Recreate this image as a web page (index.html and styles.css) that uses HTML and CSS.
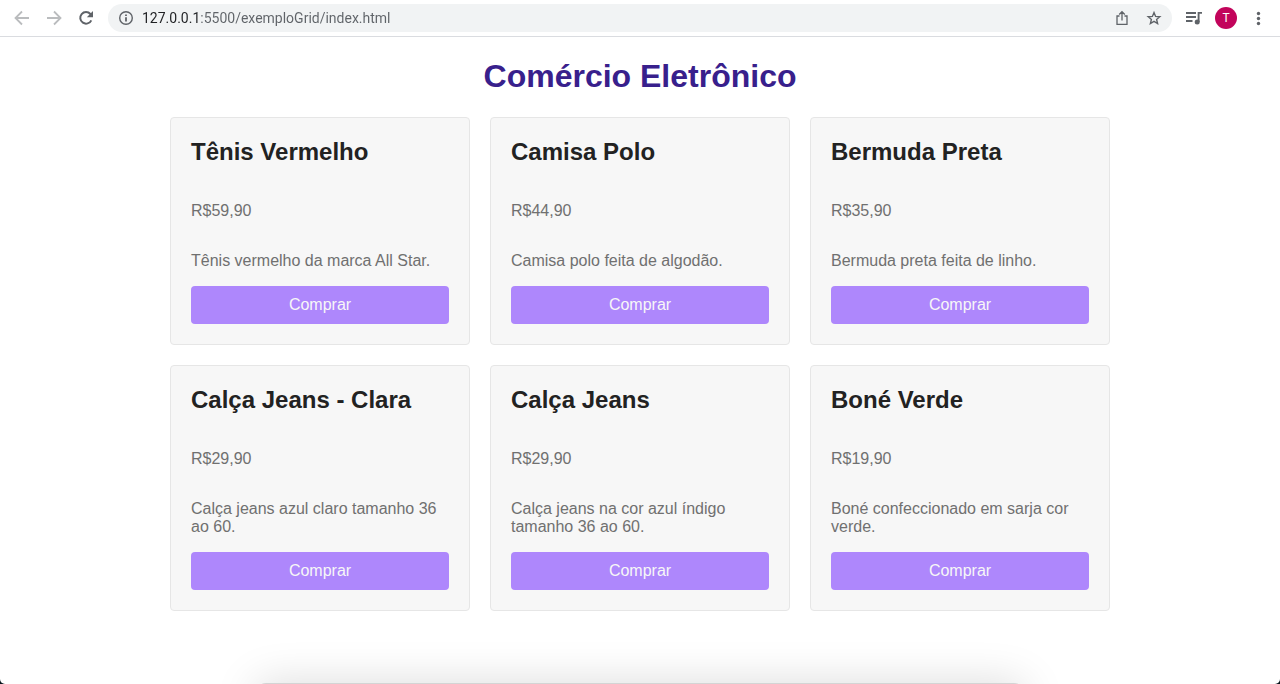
FILE: index.html
```html
<!DOCTYPE html>
<html lang="pt-BR">
<head>
<meta charset="utf-8">
<meta name="viewport" content="width=device-width, initial-scale=1">
<title>Comércio Eletrônico</title>
<link rel="stylesheet" href="styles.css">
</head>
<body>
<div class="window">
  <header class="toolbar">
    <nav class="nav-buttons" aria-label="Navegação">
      <button class="icon-button faded" type="button" aria-label="Voltar"><svg viewBox="0 0 16 16"><path d="M15 8H2M8 1.5 1.5 8 8 14.5"/></svg></button>
      <button class="icon-button faded" type="button" aria-label="Avançar"><svg viewBox="0 0 16 16"><path d="M1 8h13M8 1.5 14.5 8 8 14.5"/></svg></button>
      <button class="icon-button" type="button" aria-label="Recarregar"><svg viewBox="0 0 16 16"><path stroke-width="2" d="M13.3 10.3A5.8 5.8 0 1 1 12.4 4L13.6 5.2"/><path class="solid" d="M15 1v6.2H8.8z"/></svg></button>
    </nav>
    <div class="address-bar">
      <button class="icon-button" type="button" aria-label="Informações do site"><svg viewBox="0 0 16 16"><circle cx="8" cy="8" r="6.3" stroke-width="1.4"/><path d="M8 7.2v4.2M8 4.4v1.7"/></svg></button>
      <input class="address" type="text" aria-label="Endereço" value="127.0.0.1:5500/exemploGrid/index.html">
      <button class="icon-button" type="button" aria-label="Compartilhar"><svg viewBox="0 0 16 16"><path stroke-width="1.3" d="M5.5 6H3v8.300h10V6h-2.500M8 10.500V1.800M5.200 4.500 8 1.700l2.800 2.800"/></svg></button>
      <button class="icon-button" type="button" aria-label="Favoritar"><svg viewBox="0 0 16 16"><path stroke-width="1.4" d="m8 2.500 1.600 3.900 4.200.3-3.200 2.700 1 4.100L8 11.300l-3.600 2.200 1-4.100-3.200-2.700 4.200-.3z"/></svg></button>
    </div>
    <div class="tools">
      <button class="icon-button" type="button" aria-label="Controlar mídia"><svg viewBox="0 0 16 16"><path d="M0 3h10M0 7h10M0 11h6.500" stroke-width="1.800"/><path d="M12.600 12V2.900H16" stroke-width="1.900"/><circle class="solid" cx="11.200" cy="12" r="2.500"/></svg></button>
      <button class="avatar" type="button" aria-label="Perfil T">T</button>
      <button class="icon-button" type="button" aria-label="Menu"><svg viewBox="0 0 16 16"><g class="solid"><circle cx="8.500" cy="3.500" r="1.700"/><circle cx="8.500" cy="8.500" r="1.700"/><circle cx="8.500" cy="13.500" r="1.700"/></g></svg></button>
    </div>
  </header>
  <main class="store">
    <h1 class="store-title">Comércio Eletrônico</h1>
    <div class="products">
      <article class="card"><h2 class="name">Tênis Vermelho</h2><p class="price">R$59,90</p><p class="description">Tênis vermelho da marca All Star.</p><button class="buy" type="button">Comprar</button></article>
      <article class="card"><h2 class="name">Camisa Polo</h2><p class="price">R$44,90</p><p class="description">Camisa polo feita de algodão.</p><button class="buy" type="button">Comprar</button></article>
      <article class="card"><h2 class="name">Bermuda Preta</h2><p class="price">R$35,90</p><p class="description">Bermuda preta feita de linho.</p><button class="buy" type="button">Comprar</button></article>
      <article class="card"><h2 class="name">Calça Jeans - Clara</h2><p class="price">R$29,90</p><p class="description">Calça jeans azul claro tamanho 36 ao 60.</p><button class="buy" type="button">Comprar</button></article>
      <article class="card"><h2 class="name">Calça Jeans</h2><p class="price">R$29,90</p><p class="description">Calça jeans na cor azul índigo tamanho 36 ao 60.</p><button class="buy" type="button">Comprar</button></article>
      <article class="card"><h2 class="name">Boné Verde</h2><p class="price">R$19,90</p><p class="description">Boné confeccionado em sarja cor verde.</p><button class="buy" type="button">Comprar</button></article>
    </div>
  </main>
  <div class="dock-edge"></div>
</div>
</body>
</html>
```
FILE: styles.css
```css
* { box-sizing: border-box; }
html { background: #06161c; }
body { margin: 0; font-family: "Liberation Sans", Arial, sans-serif; font-size: 16px; line-height: 18px; }
button { border: 0; padding: 0; background: none; font: inherit; }

.window {
  position: relative;
  min-height: 100vh;
  overflow: hidden;
  background: #fff;
  border-radius: 0 0 5px 5px;
}

.toolbar {
  display: flex;
  align-items: center;
  gap: 14px;
  padding: 4px 14px;
  border-bottom: 1px solid #dadce0;
}
.nav-buttons, .tools { display: flex; align-items: center; }
.nav-buttons { gap: 16px; }
.tools { gap: 13px; }
.icon-button { display: flex; flex: none; color: #5f6368; }
.icon-button.faded { color: #babcbe; }
.icon-button svg { width: 16px; height: 16px; fill: none; stroke: currentColor; stroke-width: 1.8; }
.icon-button .solid { fill: currentColor; stroke: none; }

.address-bar {
  display: flex;
  flex: 1;
  align-items: center;
  gap: 16px;
  height: 28px;
  padding: 0 10px;
  border-radius: 14px;
  background: #f1f3f4;
}
/* The host is darker than the rest of the address. */
.address {
  flex: 1;
  min-width: 0;
  margin-left: -8px;
  padding: 0;
  border: 0;
  font: 14px/20px Roboto, sans-serif;
  color: transparent;
  background: linear-gradient(to right, #202124 59px, #5f6368 59px) text;
  caret-color: #202124;
}
.avatar {
  width: 22px;
  height: 22px;
  border-radius: 50%;
  background: #c2045b;
  color: #fff;
  font: 12px/22px Roboto, sans-serif;
}

.store { max-width: 980px; margin: 0 auto; padding: 21px 20px; }
.store-title {
  margin: 0 0 23px;
  color: #38208c;
  font-size: 32px;
  line-height: 36px;
  text-align: center;
}
.products { display: grid; grid-template-columns: repeat(auto-fit, minmax(260px, 1fr)); gap: 20px; }
.card {
  display: flex;
  flex-direction: column;
  padding: 20px;
  border: 1px solid #e6e6e6;
  border-radius: 4px;
  background: #f7f7f7;
  color: #707070;
}
.name { margin: 0 0 36px; color: #222; font-size: 24px; line-height: 28px; }
.price { margin: 0 0 32px; }
.description { margin: 0 0 16px; }
.buy { margin-top: auto; padding: 10px; border-radius: 4px; background: #ae87fc; color: #f7f7f7; }

/* Top edge of the dock, with its shadow over the window. */
.dock-edge {
  position: absolute;
  left: 20%;
  right: 20%;
  bottom: -39px;
  height: 40px;
  border-radius: 10px;
  background: #d4d4d4;
  box-shadow: 0 0 44px rgba(0, 0, 0, 0.15);
}
```
